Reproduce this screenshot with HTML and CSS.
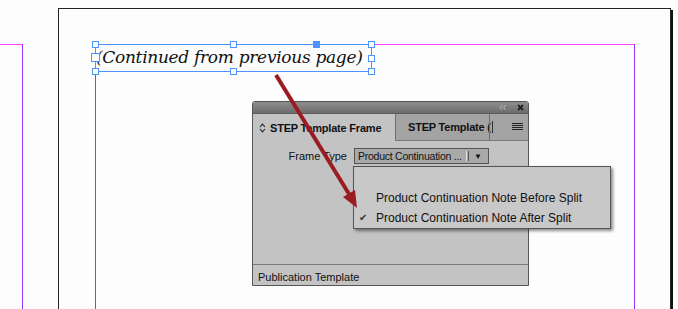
FILE: index.html
```html
<!DOCTYPE html>
<html lang="en">
<head>
  <meta charset="UTF-8" />
  <title>STEP Template Frame</title>
  <link rel="stylesheet" href="styles.css">
</head>
<body>

  <div class="canvas">
    <!-- previous page margins -->
    <div class="prev-margin"></div>

    <!-- current page -->
    <div class="page">
      <div class="margins"></div>
      <div class="text-frame">
        <span class="frame-text">(Continued from previous page)</span>
        <i class="handle h-tl"></i>
        <i class="handle h-tc"></i>
        <i class="handle h-tr"></i>
        <i class="handle h-ml port"></i>
        <i class="handle h-mr"></i>
        <i class="handle h-bl"></i>
        <i class="handle h-bc"></i>
        <i class="handle h-br"></i>
        <i class="handle out-port"></i>
      </div>
    </div>

    <!-- floating panel -->
    <div class="panel">
      <div class="panel-titlebar">
        <svg width="7" height="5" viewBox="0 0 7 5">
          <path d="M3 0.5 L1 2.5 L3 4.5 M6.5 0.5 L4.5 2.5 L6.5 4.5" fill="none" stroke="#c8c8c8" stroke-width="1"/>
        </svg>
        <svg width="7" height="7" viewBox="0 0 7 7">
          <path d="M1 1 L6 6 M6 1 L1 6" stroke="#222" stroke-width="1.8"/>
        </svg>
      </div>
      <div class="panel-tabs">
        <div class="tab active">
          <svg class="tab-icon" width="7" height="10" viewBox="0 0 7 10">
            <path d="M1 4 L3.5 1.2 L6 4" fill="none" stroke="#222" stroke-width="1.1"/>
            <path d="M1 6 L3.5 8.8 L6 6" fill="none" stroke="#222" stroke-width="1.1"/>
          </svg>
          STEP Template Frame
        </div>
        <div class="tab inactive"><span class="tab-clip">STEP Template (</span></div>
        <div class="tab-menu">
          <svg width="11" height="8" viewBox="0 0 11 8">
            <path d="M0 0.5 H11 M0 2.5 H11 M0 4.5 H11 M0 6.5 H11" stroke="#222" stroke-width="1"/>
          </svg>
        </div>
      </div>
      <div class="panel-body">
        <div class="field-row">
          <label class="field-label">Frame Type</label>
          <div class="select">
            <span class="select-value">Product Continuation ...</span>
            <span class="select-sep"></span>
            <span class="select-arrow">&#x25BC;</span>
          </div>
        </div>
      </div>
      <div class="panel-footer">Publication Template</div>
    </div>

    <!-- open dropdown -->
    <ul class="menu">
      <li class="menu-item"></li>
      <li class="menu-item">Product Continuation Note Before Split</li>
      <li class="menu-item checked">Product Continuation Note After Split</li>
    </ul>

    <!-- annotation arrow -->
    <svg class="arrow" width="678" height="309" viewBox="0 0 678 309">
      <line x1="276" y1="75" x2="349" y2="194" stroke="#9b1b23" stroke-width="4"/>
      <polygon points="357,208 343,197 355,190" fill="#9b1b23"/>
    </svg>
  </div>

</body>
</html>
```

FILE: styles.css
```css
html, body {
  margin: 0;
  padding: 0;
}

body {
  background-color: #fdfdfd;
  font-family: 'Liberation Sans', Tahoma, Arial, sans-serif;
  width: 678px;
  height: 309px;
  overflow: hidden;
}

.canvas {
  position: relative;
  width: 678px;
  height: 309px;
  overflow: hidden;
}

.prev-margin {
  position: absolute;
  left: -10px;
  top: 44px;
  width: 32px;
  height: 300px;
  border-top: 1px solid #ff40ff;
  border-right: 1px solid #9933ff;
}

.page {
  position: absolute;
  left: 58px;
  top: 8px;
  width: 611px;
  height: 320px;
  background-color: #fdfdfd;
  border-top: 1px solid #222;
  border-left: 1px solid #222;
  border-right: 1px solid #222;
  box-shadow: 2px 2px 0 #111;
}

.margins {
  position: absolute;
  left: 36px;
  top: 35px;
  width: 538px;
  height: 300px;
  border-top: 1px solid #ff40ff;
  border-left: 1px solid #9933ff;
  border-right: 1px solid #9933ff;
}

.text-frame {
  position: absolute;
  left: 36px;
  top: 35px;
  width: 275px;
  height: 26px;
  border: 1px solid #4d94ff;
  box-sizing: content-box;
}

.frame-text {
  position: absolute;
  left: 0;
  top: 0;
  font-family: 'DejaVu Serif', serif;
  font-style: italic;
  font-size: 17px;
  line-height: 24px;
  letter-spacing: -0.3px;
  color: #111;
  white-space: nowrap;
}

.handle {
  position: absolute;
  width: 5px;
  height: 5px;
  background-color: #fff;
  border: 1px solid #4d94ff;
}

.h-tl { left: -4px; top: -4px; }
.h-tc { left: 134px; top: -4px; }
.h-tr { right: -4px; top: -4px; }
.h-ml { left: -5px; top: 8px; }
.h-mr { right: -4px; top: 10px; }
.h-bl { left: -4px; bottom: -4px; }
.h-bc { left: 134px; bottom: -4px; }
.h-br { right: -4px; bottom: -4px; }

.handle.port {
  width: 7px;
  height: 7px;
}

.handle.out-port {
  left: 217px;
  top: -4px;
  background-color: #4d94ff;
}

/* panel */

.panel {
  position: absolute;
  left: 252px;
  top: 101px;
  width: 275px;
  height: 183px;
  background-color: #c3c3c3;
  border: 1px solid #555;
  border-radius: 3px 3px 0 0;
  display: flex;
  flex-direction: column;
  font-size: 11px;
  color: #111;
}

.panel-titlebar {
  height: 11px;
  background: linear-gradient(#8e8e8e, #6c6c6c);
  border-radius: 2px 2px 0 0;
  display: flex;
  justify-content: flex-end;
  align-items: center;
  gap: 11px;
  padding-right: 4px;
}

.panel-tabs {
  height: 27px;
  display: flex;
  background-color: #a3a3a3;
  border-top: 1px solid #5a5a5a;
}

.tab {
  display: flex;
  align-items: center;
  font-weight: bold;
  font-size: 11px;
  letter-spacing: -0.2px;
  white-space: nowrap;
}

.tab.active {
  width: 136px;
  padding-left: 6px;
  background-color: #c3c3c3;
  gap: 4px;
}

.tab.inactive {
  width: 81px;
  padding-left: 12px;
  border-left: 1px solid #6f6f6f;
  border-bottom: 1px solid #7a7a7a;
}

.tab-clip {
  display: block;
  padding-right: 1px;
  border-right: 1px solid #333;
}

.tab-menu {
  flex: 1;
  display: flex;
  align-items: center;
  justify-content: flex-end;
  padding-right: 5px;
  border-left: 1px solid #6f6f6f;
  border-bottom: 1px solid #7a7a7a;
}

.panel-body {
  flex: 1;
  padding-top: 7px;
}

.field-row {
  display: flex;
  align-items: center;
  height: 16px;
}

.field-label {
  width: 94px;
  text-align: right;
  padding-right: 7px;
}

.select {
  width: 130px;
  height: 14px;
  background-color: #a9a9a9;
  border: 1px solid #555;
  display: flex;
  align-items: center;
  padding-left: 3px;
  box-sizing: content-box;
}

.select-value {
  width: 108px;
  white-space: nowrap;
  font-size: 10.5px;
  letter-spacing: -0.25px;
}

.select-sep {
  width: 1px;
  height: 10px;
  border-left: 1px solid #e0e0e0;
  border-right: 1px solid #555;
  margin-right: 5px;
}

.select-arrow {
  font-size: 8px;
  color: #111;
}

.panel-footer {
  height: 20px;
  line-height: 24px;
  padding-left: 5px;
  border-top: 1px solid #7a7a7a;
}

/* dropdown menu */

.menu {
  position: absolute;
  left: 353px;
  top: 166px;
  width: 256px;
  margin: 0;
  padding: 0;
  list-style: none;
  background-color: #c8c8c8;
  border: 1px solid #555;
  box-shadow: 2px 2px 3px rgba(0,0,0,0.45);
  font-size: 12px;
  color: #111;
}

.menu-item {
  height: 20px;
  line-height: 20px;
  padding-left: 22px;
  white-space: nowrap;
  position: relative;
}

.menu-item:first-child {
  height: 21px;
}

.menu-item.checked::before {
  content: "\2714";
  position: absolute;
  left: 5px;
  top: 0;
  font-family: 'DejaVu Sans', sans-serif;
  font-size: 10px;
  color: #333;
}

.arrow {
  position: absolute;
  left: 0;
  top: 0;
  pointer-events: none;
}
```
